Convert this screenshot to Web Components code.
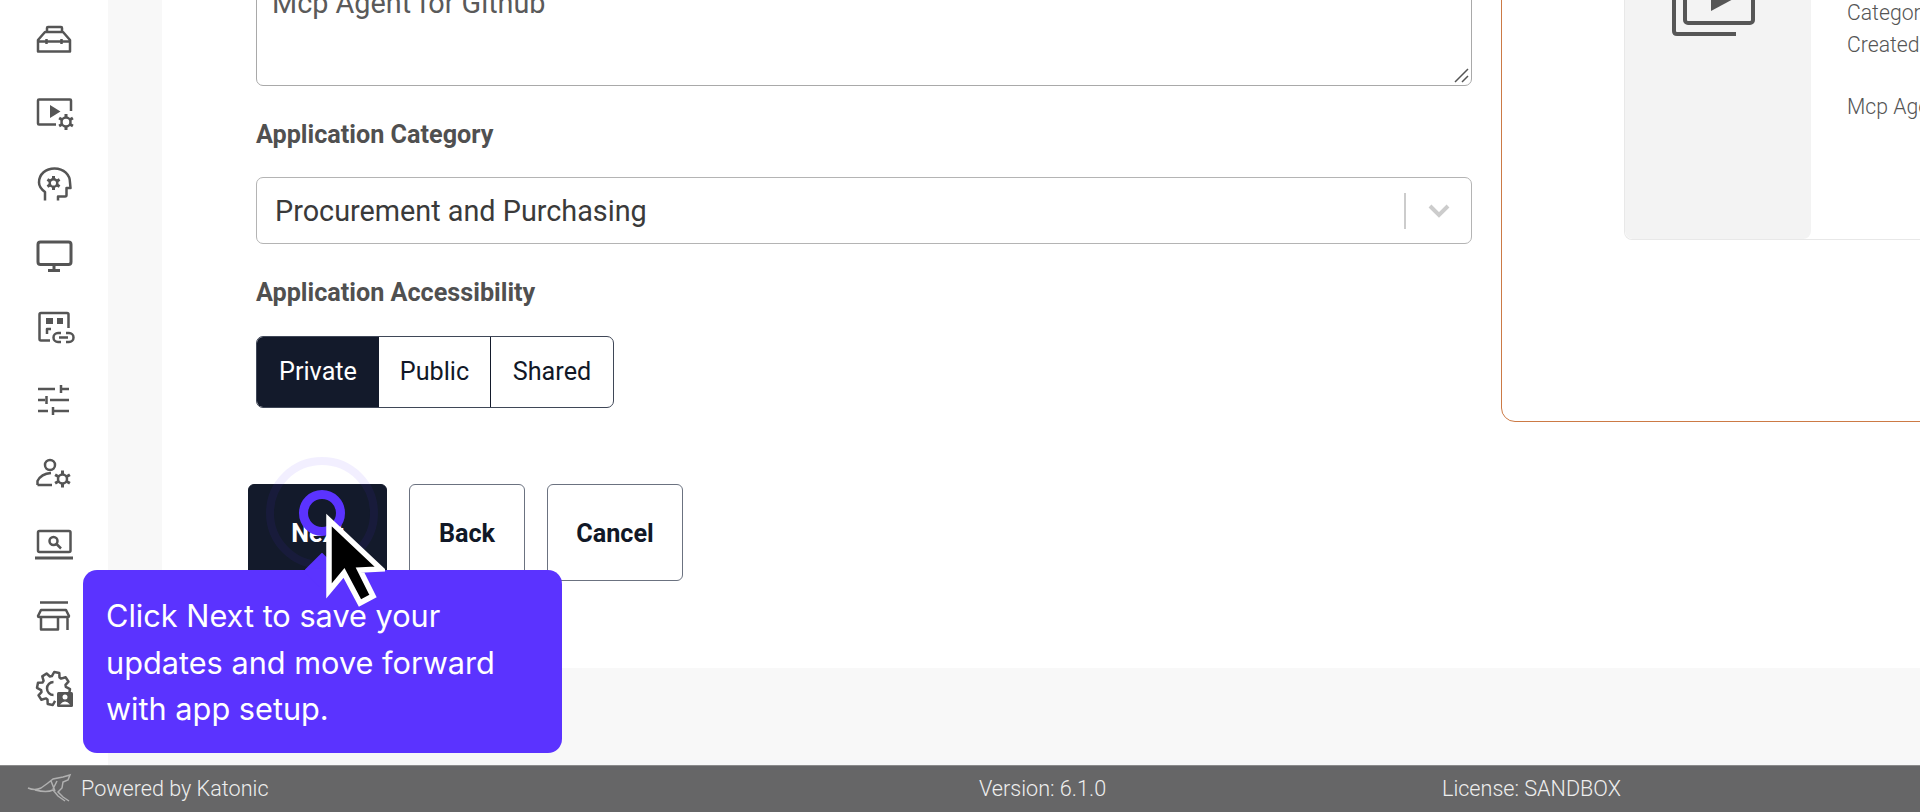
<!DOCTYPE html>
<html>
<head>
<meta charset="utf-8">
<title>App setup</title>
<style>
  html, body { margin: 0; height: 100%; overflow: hidden; background: #fff; font-family: Roboto, "Liberation Sans", sans-serif; }
</style>
</head>
<body>
<app-shell>
  <side-nav slot="nav"></side-nav>
  <setup-form slot="form"></setup-form>
  <preview-card slot="preview"></preview-card>
  <app-footer slot="footer"></app-footer>
  <guide-tip slot="tip">Click Next to save your updates and move forward with app setup.</guide-tip>
</app-shell>

<script>
class AppShell extends HTMLElement {
  constructor() {
    super();
    this.attachShadow({ mode: "open" }).innerHTML = `
      <style>
        :host { display: grid; grid-template-rows: 765px 47px; grid-template-columns: 108px 1fr; width: 1920px; height: 812px; overflow: hidden; position: relative; }
        .gutter { background: #f8f8f8; padding: 0 0 97px 54px; overflow: hidden; box-sizing: border-box; height: 765px; }
        .card { background: #fff; height: 668px; display: flex; overflow: hidden; }
        .footer { grid-column: 1 / 3; }
        .form { flex: 0 0 1339px; }
        .preview { flex: 1; min-width: 0; }
      </style>
      <div class="nav"><slot name="nav"></slot></div>
      <div class="gutter">
        <div class="card">
          <div class="form"><slot name="form"></slot></div>
          <div class="preview"><slot name="preview"></slot></div>
        </div>
      </div>
      <div class="footer"><slot name="footer"></slot></div>
      <slot name="tip"></slot>
    `;
  }
}

// small gear: ring with six teeth
function gear(cx, cy, r, R) {
  let teeth = "";
  for (let i = 0; i < 6; i++) {
    const a = Math.PI / 6 + i * Math.PI / 3;
    teeth += `M${(cx + r * Math.cos(a)).toFixed(1)} ${(cy + r * Math.sin(a)).toFixed(1)} L${(cx + R * Math.cos(a)).toFixed(1)} ${(cy + R * Math.sin(a)).toFixed(1)} `;
  }
  return `<circle cx="${cx}" cy="${cy}" r="${r}"/><path d="${teeth}" stroke-width="3"/>`;
}

// open gear outline, angles in degrees
function gearOutline(cx, cy, r, R, from, to, step) {
  const pts = [];
  for (let a = from; a <= to; a += step) {
    const at = (rad, deg) => `${(cx + rad * Math.cos(deg * Math.PI / 180)).toFixed(1)} ${(cy + rad * Math.sin(deg * Math.PI / 180)).toFixed(1)}`;
    pts.push(at(r, a - step * .5), at(R, a - step * .28), at(R, a + step * .12), at(r, a + step * .3));
  }
  return `<path d="M${pts.join(" L")}"/>`;
}

class SideNav extends HTMLElement {
  constructor() {
    super();
    const icons = [
      `<path d="M4 31.500 V20 L11 12 H29 L36 20 V31.500Z M13 12 V8 Q13 7 14 7 H27 Q28 7 28 8 V12 M4 21.500 H36 M12.500 19 V24 M27.500 19 V24"/>`,
      `<path d="M22 32.500 H5 Q4 32.500 4 31.500 V8.500 Q4 7.500 5 7.500 H36 Q37 7.500 37 8.500 V19"/><path d="M16 13 L26.500 19.500 L16 26Z" fill="#555" stroke="none"/>${gear(32, 30, 4.5, 8)}`,
      `<path d="M11 36.500 V28 C7 25 5 22 5 18.500 C5 10 12 4.500 20.500 4.500 C30 4.500 36 11 36 18.500 L36.500 24 H32.500 V31 Q32.500 32.500 31 32.500 H24 V36.500"/>${gear(19.5, 19, 3.8, 7)}`,
      `<rect x="4" y="6" width="33" height="22.500" rx="2.500" stroke-width="3"/><path d="M20 29 V33" stroke-width="3"/><path d="M14 34.500 H26" stroke-width="3"/>`,
      `<path d="M16 32.500 H7 Q5.500 32.500 5.500 31 V6.500 Q5.500 5 7 5 H33 Q34.500 5 34.500 6.500 V20"/><path d="M12 10 H19 V16 H12Z M23 10 H29 V16 H23Z" fill="#555" stroke="none"/><path d="M13 26 V21 H17"/><path d="M27 25 H24 A4.500 4.500 0 0 0 24 34 H27 M32 25 H35 A4.500 4.500 0 0 1 35 34 H32 M25 29.500 H34"/>`,
      `<path d="M4 9 H21 M27 5 V13 M27 9 H35 M4 20 H11 M12.500 16 V24 M16 20 H35 M4 31 H14 M19 27 V35 M19 31 H35"/>`,
      `<circle cx="16" cy="13" r="5"/><path d="M3.500 33 V29 C6 24 11 21.500 17 21 M3.500 33 H18"/>${gear(28.5, 27, 4.5, 8.5)}`,
      `<rect x="4" y="7" width="32.500" height="21" rx="1.500"/><circle cx="19.500" cy="17" r="4"/><path d="M22.500 20 L27 24.500"/><path d="M1 34 H39" stroke-width="3"/>`,
      `<path d="M6 6.500 H34"/><path d="M7 14 H32 L35 20 Q35 21 34 21 H5 Q4 21 4 20Z M7 21 V33.500 H24 V21 M33.500 21 V34"/>`,
      `${gearOutline(19.5, 20.5, 12.5, 16.5, 105, 375, 45)}<path d="M19.500 27 A6.500 6.500 0 0 1 19.500 14"/><rect x="23" y="24" width="16" height="15" rx="1.500" fill="#555" stroke="none"/><circle cx="31" cy="29" r="2.500" fill="#fff" stroke="none"/><path d="M26 36.500 Q31 30.500 36 36.500Z" fill="#fff" stroke="none"/>`
    ];
    this.attachShadow({ mode: "open" }).innerHTML = `
      <style>
        :host { display: flex; flex-direction: column; height: 765px; padding-top: 4px; box-sizing: border-box; background: #fff; }
        .item { height: 72px; flex: none; display: flex; align-items: center; padding-left: 34px; }
        svg { width: 40px; height: 40px; overflow: visible; fill: none; stroke: #555; stroke-width: 2.500; stroke-linejoin: round; }
      </style>
      ${icons.map(i => `<div class="item"><svg viewBox="0 0 40 40">${i}</svg></div>`).join("")}
    `;
  }
}

class SetupForm extends HTMLElement {
  constructor() {
    super();
    this.attachShadow({ mode: "open" }).innerHTML = `
      <style>
        :host { display: block; padding-left: 94px; color: #111827; }
        .area { box-sizing: border-box; width: 1216px; height: 126px; margin-top: -40px; border: 1.500px solid #a9a9a9; border-radius: 7px; padding: 26px 15px; font-size: 28.800px; line-height: 32px; color: #5a5a5a; position: relative; }
        .grip { position: absolute; right: 2px; bottom: 2px; width: 16px; height: 16px; }
        label { display: block; font-weight: 700; font-size: 25.200px; line-height: 28px; color: #505050; margin: 35px 0 28px; }
        .select { box-sizing: border-box; width: 1216px; height: 67px; border: 1.500px solid #b4b4b4; border-radius: 7px; display: flex; align-items: center; padding-left: 18px; font-size: 28.800px; color: #3a3a3a; }
        .select span { flex: 1; }
        .sep { width: 2px; height: 36px; background: #ccc; }
        .chev { width: 65px; display: flex; justify-content: center; }
        label.second { margin-bottom: 29px; }
        .toggle { display: inline-flex; height: 72px; border: 1.500px solid #3f4757; border-radius: 7px; overflow: hidden; box-sizing: border-box; font-size: 25.200px; padding-bottom: 0; }
        .toggle div { display: flex; align-items: center; justify-content: center; box-sizing: border-box; padding-bottom: 2px; }
        .toggle .on { width: 122px; background: #131a2b; color: #fff; }
        .toggle .pub { width: 112px; border-right: 1.500px solid #131a2b; }
        .toggle .sh { width: 122px; }
        .actions { display: flex; gap: 22px; margin: 76px 0 0 -8px; }
        .btn { box-sizing: border-box; height: 97px; border: 1.500px solid #6b7280; border-radius: 6px; display: flex; align-items: center; justify-content: center; font-size: 25.200px; font-weight: 700; color: #111827; padding-top: 2px; }
      </style>
      <div class="area">Mcp Agent for Github
        <svg class="grip" viewBox="0 0 16 16"><path d="M2 15 L15 2 M9 15 L15 9" stroke="#555" stroke-width="1.500" fill="none"/></svg>
      </div>
      <label>Application Category</label>
      <div class="select"><span>Procurement and Purchasing</span><div class="sep"></div>
        <div class="chev"><svg width="24" height="16" viewBox="0 0 24 16"><path d="M3 3 L12 12 L21 3" stroke="#ccc" stroke-width="4" fill="none"/></svg></div>
      </div>
      <label class="second">Application Accessibility</label>
      <div class="toggle"><div class="on">Private</div><div class="pub">Public</div><div class="sh">Shared</div></div>
      <div class="actions">
        <div class="btn" style="width:139px;background:#131a2b;color:#fff;border-color:#131a2b">Next</div>
        <div class="btn" style="width:116px">Back</div>
        <div class="btn" style="width:136px">Cancel</div>
      </div>
    `;
  }
}

class PreviewCard extends HTMLElement {
  constructor() {
    super();
    this.attachShadow({ mode: "open" }).innerHTML = `
      <style>
        :host { display: block; }
        .outer { box-sizing: border-box; width: 560px; height: 462px; margin-top: -40px; border: 1.500px solid #cc7a45; border-radius: 14px; padding: 0 0 0 121.500px; }
        .inner { box-sizing: border-box; width: 420px; height: 279px; border: 1.500px solid #e8e8e8; border-top: 0; border-radius: 0 0 8px 8px; display: flex; }
        .thumb { flex: 0 0 186.500px; background: #f3f3f3; border-radius: 0 0 8px 8px; }
        .thumb svg { display: block; margin: 38.500px 0 0 44.500px; overflow: visible; }
        .meta { padding: 0 0 0 36px; font-weight: 300; font-size: 21.200px; line-height: 32px; color: #555; white-space: nowrap; }
        .meta p { margin: 0; }
        .meta .top { margin-top: 36px; }
        .meta .desc { margin-top: 30px; }
      </style>
      <div class="outer">
        <div class="inner">
          <div class="thumb">
            <svg width="90" height="40" viewBox="0 0 90 40" fill="none" stroke="#565656" stroke-width="4">
              <rect x="16" y="-30" width="68" height="53" rx="3"/>
              <path d="M42 11 V-20 L68 -3Z" fill="#565656" stroke="none"/>
              <path d="M5 -10 V31 Q5 34 8 34 H67"/>
            </svg>
          </div>
          <div class="meta">
            <p class="top">Category</p>
            <p>Created</p>
            <p class="desc">Mcp Agent for Github</p>
          </div>
        </div>
      </div>
    `;
  }
}

class AppFooter extends HTMLElement {
  constructor() {
    super();
    this.attachShadow({ mode: "open" }).innerHTML = `
      <style>
        :host { display: flex; align-items: center; box-sizing: border-box; height: 47px; background: #666667; border-top: 1px solid #8b8b8b; color: #eee; font-size: 21.600px; font-weight: 300; padding: 0 0 2px 27px; }
        .logo { width: 45px; height: 30px; margin-right: 9px; }
        .a { width: 898px; }
        .b { width: 463px; }
      </style>
      <svg class="logo" viewBox="0 0 45 30" fill="none" stroke="#b0b0b0" stroke-width="1.500"><path d="M1 15 Q8 18 14 15 Q20 11 26 6 L36 4 L43 2 L41 7 L36 9 L35 15 L31 19 L36 24 L42 28 M8 17 Q20 20 26 17 L31 23 L38 28 M24 8 L28 18 M30 8 L26 16"/></svg>
      <span class="a">Powered by Katonic</span>
      <span class="b">Version: 6.1.0</span>
      <span>License: SANDBOX</span>
    `;
  }
}

class GuideTip extends HTMLElement {
  constructor() {
    super();
    this.attachShadow({ mode: "open" }).innerHTML = `
      <style>
        :host { position: absolute; left: 83px; top: 570px; width: 479px; height: 183px; box-sizing: border-box; padding: 23px 23px; background: #5b33ff; border-radius: 14px; color: #fff; font: 400 30.700px/46.500px Inter, "Liberation Sans", sans-serif; z-index: 5; }
        .arrow { position: absolute; left: 222px; top: -17px; width: 34px; height: 34px; overflow: hidden; }
        .arrow i { display: block; width: 26px; height: 26px; margin: 5px 0 0 4px; background: #5b33ff; transform: rotate(45deg); }
        .ring { position: absolute; border-radius: 50%; box-sizing: border-box; }
        .r1 { left: 183px; top: -113px; width: 112px; height: 112px; border: 8px solid rgba(91,51,255,.08); }
        .r2 { left: 216px; top: -80px; width: 46px; height: 46px; border: 9px solid #5b33ff; }
        .cursor { position: absolute; left: 240px; top: -58px; width: 62px; height: 96px; }
      </style>
      <div class="arrow"><i></i></div>
      <div class="ring r1"></div>
      <div class="ring r2"></div>
      <svg class="cursor" viewBox="0 0 62 96"><path d="M6 8 V79 L21 61 L37 91 L50 84 L37 58 L58 57Z" fill="#000" stroke="#fff" stroke-width="5.500" stroke-linejoin="miter"/></svg>
      <slot></slot>
    `;
  }
}

customElements.define("app-shell", AppShell);
customElements.define("side-nav", SideNav);
customElements.define("setup-form", SetupForm);
customElements.define("preview-card", PreviewCard);
customElements.define("app-footer", AppFooter);
customElements.define("guide-tip", GuideTip);
</script>
</body>
</html>
